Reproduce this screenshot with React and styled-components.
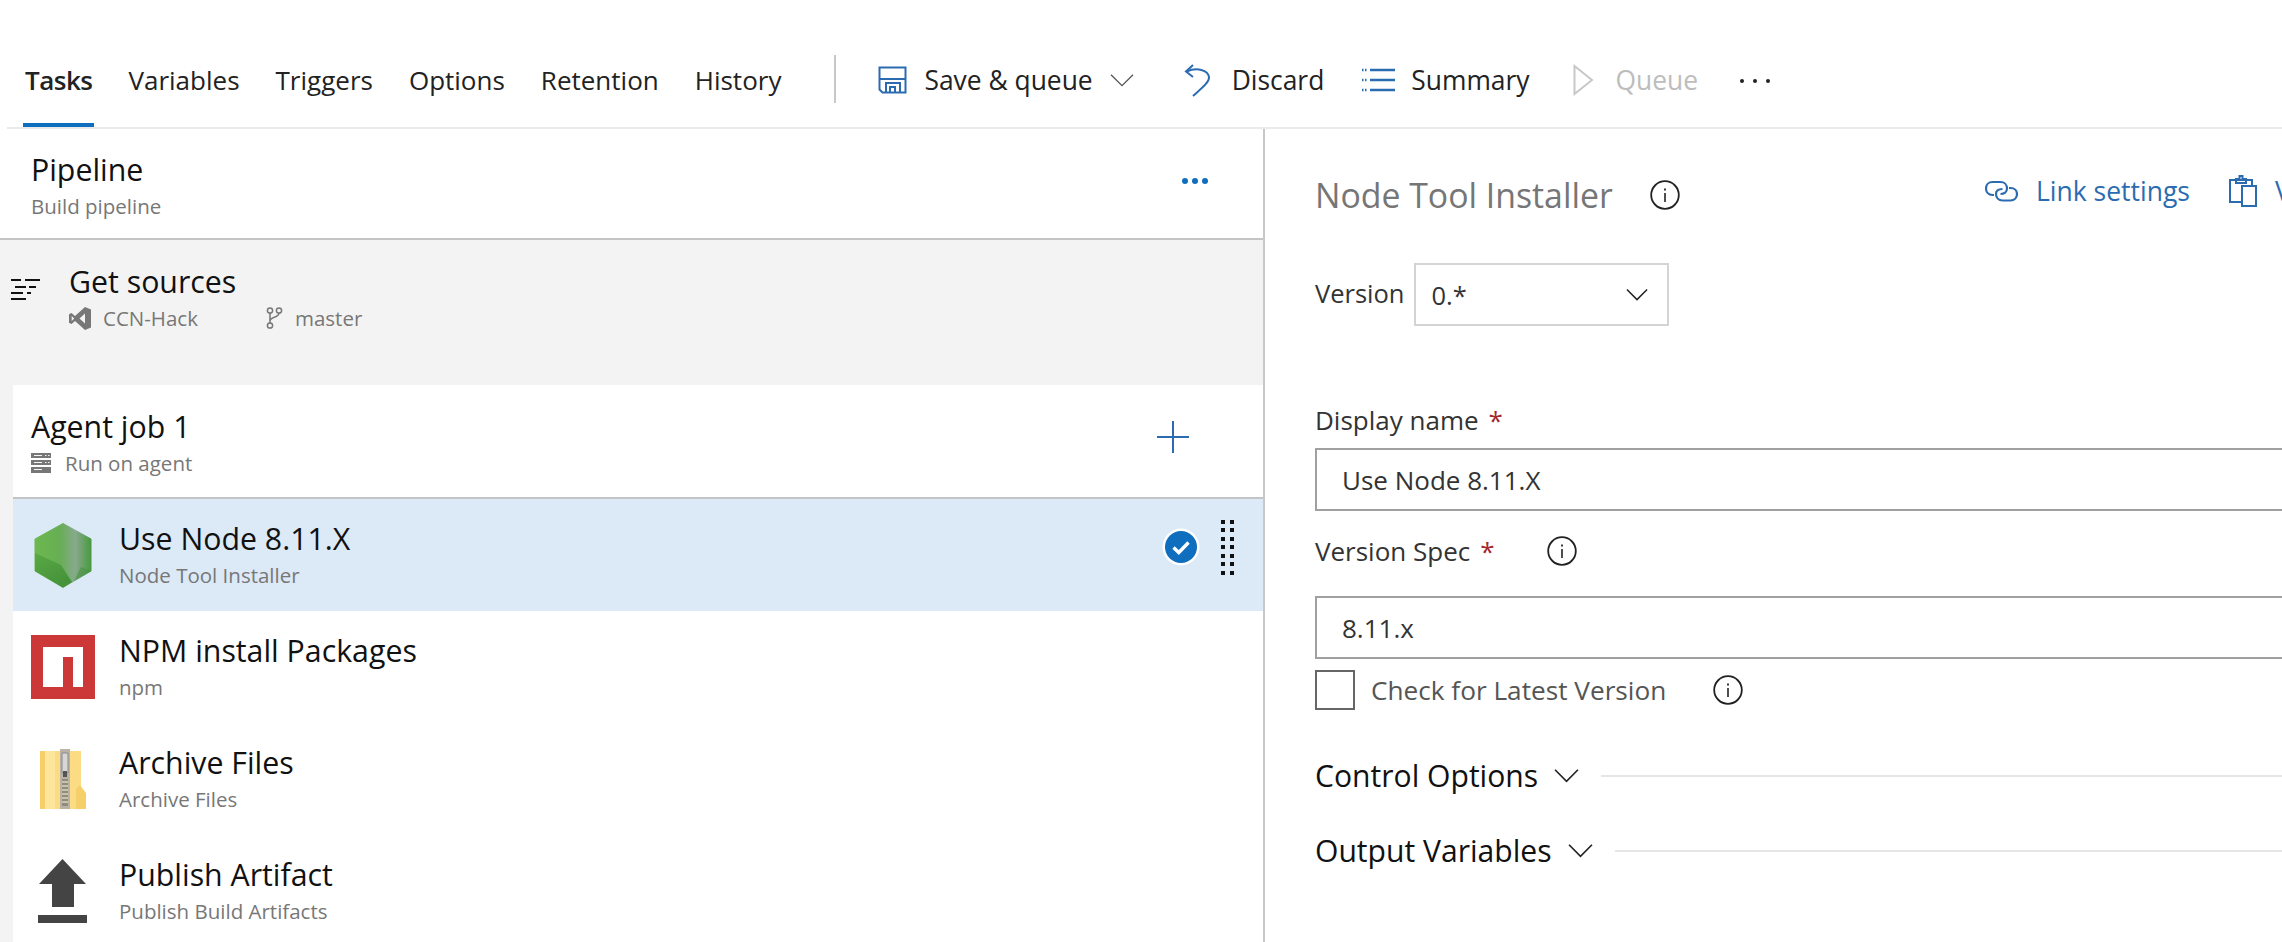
import React from "react";
import styled, { createGlobalStyle } from "styled-components";

const GlobalStyle = createGlobalStyle`
  html, body { margin: 0; padding: 0; background: #fff; }
  body { font-family: "Open Sans", "Noto Sans", sans-serif; color: #111; }
`;

const BLUE = "#2b6cb0";

const InfoIcon = ({ size = 30 }) => (
  <svg width={size} height={size} viewBox="0 0 30 30" fill="none" stroke="#222">
    <circle cx="15" cy="15" r="13.8" strokeWidth="1.8" />
    <path d="M15 13v9" strokeWidth="1.6" />
    <path d="M15 8.4v2" strokeWidth="1.8" />
  </svg>
);

const Chevron = ({ width = 24, color = "#222", weight = 1.6 }) => (
  <svg width={width} height={width * 0.6} viewBox="0 0 24 14" fill="none" stroke={color} strokeWidth={weight}>
    <path d="M1 1.5 L12 12.5 L23 1.5" />
  </svg>
);

const SaveIcon = () => (
  <svg width="29" height="28" viewBox="0 0 29 28" fill="none" stroke={BLUE} strokeWidth="2">
    <path d="M1.5 1.5h26v25H4.500l-3-3z" />
    <path d="M1.5 13h26" />
    <path d="M8 26.500V17h14v9.500" />
    <path d="M12 26v-5h5v5" />
  </svg>
);

const DiscardIcon = () => (
  <svg width="27" height="33" viewBox="0 0 27 33" fill="none" stroke={BLUE} strokeWidth="2">
    <path d="M9 1 L2 7.500 L9 13" />
    <path d="M2.500 7.500 C13 3 24 6 25 13 C25.500 18 18 24 9 32" />
  </svg>
);

const SummaryIcon = () => (
  <svg width="33" height="24" viewBox="0 0 33 24" fill="none" stroke={BLUE} strokeWidth="2.400">
    <path d="M8 2h25M8 12h25M8 22h25" />
    <path d="M0 2h5M0 12h5M0 22h5" strokeDasharray="1.5 1.5" />
  </svg>
);

const QueueIcon = () => (
  <svg width="21" height="32" viewBox="0 0 21 32" fill="none" stroke="#c8c8c8" strokeWidth="2">
    <path d="M1.500 2 L19 16 L1.500 30 Z" />
  </svg>
);

const SourcesIcon = () => (
  <svg width="29" height="23" viewBox="0 0 29 23" fill="none" stroke="#111" strokeWidth="2">
    <path d="M0 2h10M14 2h15M4 9h11M18 9h7M0 15h12M16 15h4M0 21h15" />
  </svg>
);

const VsIcon = () => (
  <svg width="22" height="23" viewBox="0 0 22 23" fill="#777">
    <path d="M16 0l6 2.500v18L16 23 6 14l-3.500 3L0 15.700V7.300L2.500 6 6 9zM16 6.500L10.500 11.500 16 16.500zM2.700 9v5l2.500-2.500z" fillRule="evenodd" />
  </svg>
);

const BranchIcon = () => (
  <svg width="17" height="22" viewBox="0 0 17 22" fill="none" stroke="#777" strokeWidth="1.500">
    <circle cx="4" cy="3.500" r="2.600" />
    <circle cx="4" cy="18.500" r="2.600" />
    <circle cx="13" cy="3.500" r="2.600" />
    <path d="M4 6v10M13 6c0 5-9 3.500-9 8" />
  </svg>
);

const ServerIcon = () => (
  <svg width="20" height="20" viewBox="0 0 20 20" fill="#777">
    <path d="M0 0h20v5H0zM0 7h20v5H0zM0 14h20v6H0z" />
    <path d="M3 2h8v1H3zM14 2h1.500v1H14zM17 2h1.500v1H17zM3 9h8v1H3zM14 9h1.500v1H14zM17 9h1.500v1H17zM3 16h8v1H3z" fill="#f4f4f4" />
  </svg>
);

const CheckBadge = () => (
  <svg width="38" height="38" viewBox="0 0 38 38">
    <circle cx="19" cy="19" r="18.500" fill="#fff" />
    <circle cx="19" cy="19" r="16" fill="#106ebe" />
    <path d="M11.500 19.500 L16.800 24.500 L26.500 14.500" fill="none" stroke="#fff" strokeWidth="3.400" />
  </svg>
);

const NodeIcon = () => (
  <svg width="58" height="65" viewBox="0 0 58 65">
    <defs>
      <linearGradient id="nodeBody" x1="0" y1="0" x2="1" y2="0">
        <stop offset="0" stopColor="#6db84f" />
        <stop offset="0.45" stopColor="#67ae55" />
        <stop offset="0.72" stopColor="#88a98d" />
        <stop offset="1" stopColor="#489a40" />
      </linearGradient>
      <linearGradient id="nodeLow" x1="0" y1="0" x2="0.6" y2="1">
        <stop offset="0" stopColor="#5aa845" />
        <stop offset="1" stopColor="#449339" />
      </linearGradient>
    </defs>
    <path d="M29 0.500 L57 16 L57 48 L29 64.500 L1 48 L1 16 Z" fill="url(#nodeBody)" stroke="url(#nodeBody)" strokeLinejoin="round" />
    <path d="M1 30 L1 48 L29 64.500 L38 59 L27 42 Z" fill="url(#nodeLow)" />
    <path d="M47 44 L57 48 L40 58 Z" fill="#46933f" opacity="0.6" />
  </svg>
);

const NpmIcon = () => (
  <svg width="64" height="64" viewBox="0 0 64 64">
    <path d="M0 0h64v64H0z" fill="#cb3837" />
    <path d="M12 12h40v40H42V22H32v30H12z" fill="#fff" />
  </svg>
);

const ZipIcon = () => (
  <svg width="48" height="60" viewBox="0 0 48 60">
    <path d="M1 2h41v58H1z" fill="#fbdc85" />
    <path d="M1 2h5v58H1z" fill="#f6cf68" />
    <path d="M6 2h10v58H6z" fill="#fee59c" />
    <path d="M37 60V40l4-4 6 8v16z" fill="#f5cf6a" />
    <path d="M21 0h10v60H21z" fill="#b8b3a6" />
    <path d="M23 4h6v20h-6z" fill="#d7d7d7" stroke="#8a8a8a" />
    <path d="M24 22h4v6h-4z" fill="#555" />
    <path d="M23 30h6v27h-6z" fill="#8f8b7d" />
    <path d="M23 33h6M23 37h6M23 41h6M23 45h6M23 49h6M23 53h6" stroke="#ddd6b8" strokeWidth="1.500" />
  </svg>
);

const PublishIcon = () => (
  <svg width="50" height="64" viewBox="0 0 50 64" fill="#444">
    <path d="M24.500 0 L48 25 L36 25 L36 48 L14 48 L14 25 L1 25 Z" />
    <path d="M0 56h49v8H0z" />
  </svg>
);

const LinkIcon = () => (
  <svg width="33" height="22" viewBox="0 0 33 22" fill="none" stroke={BLUE} strokeWidth="2.200">
    <path d="M9 15H7.500C3.500 15 1 12 1 8.500S3.500 2 7.500 2h8c4 0 6.500 3 6.500 6.500S19 14 15.500 14" />
    <path d="M24 8h1.500c4 0 6.500 2.500 6.500 6s-2.500 6.500-6.500 6.500h-8c-4 0-6.500-3-6.500-6.500S14 9 17.500 9" />
  </svg>
);

const ClipboardIcon = () => (
  <svg width="28" height="32" viewBox="0 0 28 32" fill="none" stroke={BLUE} strokeWidth="2">
    <path d="M13 27H1V5h22v6" />
    <path d="M7 8V4h3.500V1h3v3H17v4z" />
    <path d="M13 11h14v20H13z" />
  </svg>
);

const Page = styled.div`
  width: 2282px;
  height: 942px;
  overflow: hidden;
  display: flex;
  flex-direction: column;
  background: #fff;
`;

const Toolbar = styled.div`
  height: 129px;
  flex: none;
  box-sizing: border-box;
  margin-left: 7px;
  padding-left: 18px;
  border-bottom: 2px solid #eaeaea;
  display: flex;
  align-items: center;
  font-size: 26px;
`;

const Tabs = styled.div`
  display: flex;
  gap: 36px;
  align-self: stretch;
`;

const Tab = styled.div`
  padding-top: 61px;
  line-height: 38px;
  height: 127px;
  box-sizing: border-box;
  color: #222;
  position: relative;
  font-weight: ${(p) => (p.$active ? 600 : 400)};
  letter-spacing: ${(p) => (p.$active ? "-0.5px" : "0")};

  &::after {
    content: ${(p) => (p.$active ? '""' : "none")};
    position: absolute;
    left: -2px;
    right: -2px;
    bottom: 0;
    height: 4px;
    background: #106ebe;
  }
`;

const Divider = styled.div`
  width: 2px;
  height: 48px;
  background: #c8c8c8;
  margin: 30px 42px 0 53px;
`;

const Action = styled.div`
  display: flex;
  align-items: center;
  gap: ${(p) => p.$gap || 20}px;
  margin-right: ${(p) => p.$after || 0}px;
  margin-top: 33px;
  font-size: 26.400px;
  color: ${(p) => (p.$disabled ? "#bdbdbd" : "#222")};
`;

const Dots = styled.div`
  display: flex;
  gap: 9px;
  margin-top: 35px;

  & i {
    width: 4px;
    height: 4px;
    border-radius: 50%;
    background: #222;
  }
`;

const Body = styled.div`
  flex: 1;
  display: flex;
  min-height: 0;
`;

const LeftPanel = styled.div`
  width: 1265px;
  flex: none;
  box-sizing: border-box;
  border-right: 2px solid #c8c8c8;
  background: #f3f3f3;
`;

const PipelineHead = styled.div`
  height: 111px;
  box-sizing: border-box;
  background: #fff;
  border-bottom: 2px solid #c4c4c4;
  padding: 23px 0 0 31px;
  display: flex;
  justify-content: space-between;
`;

const Title = styled.div`
  font-size: 30.300px;
  line-height: 36px;
  color: #111;
`;

const Sub = styled.div`
  font-size: 20.500px;
  line-height: 36px;
  color: #777;
`;

const MoreDots = styled.div`
  display: flex;
  gap: 4px;
  margin: 26px 55px 0 0;

  & i {
    width: 6px;
    height: 6px;
    border-radius: 50%;
    background: #106ebe;
  }
`;

const Sources = styled.div`
  height: 145px;
  box-sizing: border-box;
  padding: 24px 0 0 11px;
  display: flex;
  gap: 29px;
`;

const SourcesGlyph = styled.div`
  padding-top: 14px;
`;

const MetaLine = styled.div`
  display: flex;
  align-items: center;
  gap: ${(p) => p.$gap || 12}px;
`;

const Spacer = styled.div`
  width: 44px;
`;

const Jobs = styled.div`
  margin-left: 13px;
  background: #fff;
  height: 560px;
`;

const JobHead = styled.div`
  height: 114px;
  box-sizing: border-box;
  border-bottom: 2px solid #c4c4c4;
  padding: 24px 74px 0 18px;
  display: flex;
  justify-content: space-between;
`;

const Plus = styled.div`
  width: 32px;
  height: 32px;
  margin-top: 12px;
  background:
    linear-gradient(${BLUE}, ${BLUE}) center / 100% 2px no-repeat,
    linear-gradient(${BLUE}, ${BLUE}) center / 2px 100% no-repeat;
`;

const Task = styled.div`
  height: 112px;
  display: flex;
  align-items: center;
  background: ${(p) => (p.$selected ? "#dce9f7" : "#fff")};
  position: relative;
`;

const TaskGlyph = styled.div`
  width: 106px;
  flex: none;
  display: flex;
  justify-content: center;
  padding-right: 7px;
  box-sizing: border-box;
`;

const TaskText = styled.div`
  flex: 1;
  padding-top: 4px;
`;

const TaskStatus = styled.div`
  display: flex;
  align-items: center;
  gap: 21px;
  margin-right: 29px;
  margin-top: -16px;
`;

const Gripper = styled.div`
  display: grid;
  grid-template-columns: 4px 4px;
  column-gap: 5px;
  row-gap: 4.500px;

  & i {
    height: 4px;
    background: #111;
  }
`;

const RightPanel = styled.div`
  flex: 1;
  min-width: 0;
  overflow: hidden;
  padding: 0 0 0 50px;
`;

const PanelHead = styled.div`
  height: 134px;
  box-sizing: border-box;
  display: flex;
  align-items: center;
  white-space: nowrap;
  padding-bottom: 2px;
`;

const PanelTitle = styled.div`
  font-size: 33.800px;
  line-height: 44px;
  color: #767676;
  margin-right: 37px;
`;

const HeadLinks = styled.div`
  margin-left: auto;
  display: flex;
  align-items: center;
  color: ${BLUE};
  font-size: 26.500px;
  margin-top: -8px;
  margin-right: -166px;
`;

const HeadLink = styled.div`
  display: flex;
  align-items: center;
  gap: 18px;
  margin-right: 39px;
`;

const VersionRow = styled.div`
  display: flex;
  align-items: center;
  gap: 9px;
  font-size: 25.500px;
  color: #333;
`;

const VersionLabel = styled.span`
  margin-top: -3px;
`;

const Select = styled.div`
  width: 255px;
  height: 63px;
  box-sizing: border-box;
  border: 2px solid #d4d4d4;
  padding: 0 19px 0 16px;
  display: flex;
  align-items: center;
  justify-content: space-between;
`;

const Field = styled.div`
  color: #333;
  font-size: 26px;
`;

const FieldLabel = styled.div`
  display: flex;
  align-items: center;
  box-sizing: border-box;
  line-height: 36px;
  height: ${(p) => p.$height}px;
  margin-top: ${(p) => p.$top || 0}px;
  padding-bottom: ${(p) => p.$lift || 0}px;
  gap: 10px;
`;

const Required = styled.span`
  color: #a4262c;
`;

const LabelInfo = styled.span`
  display: flex;
  margin-left: 42px;
`;

const Input = styled.div`
  width: 1100px;
  height: 63px;
  box-sizing: border-box;
  border: 2px solid #a0a0a0;
  padding: 0 25px;
  display: flex;
  align-items: center;
  font-size: 26px;
  color: #333;
`;

const CheckRow = styled.div`
  display: flex;
  align-items: center;
  margin-top: 11px;
  font-size: 26.200px;
  color: #555;
`;

const CheckBox = styled.div`
  width: 40px;
  height: 40px;
  box-sizing: border-box;
  border: 2px solid #666;
  margin-right: 16px;
`;

const CheckInfo = styled.span`
  display: flex;
  margin-left: 47px;
`;

const Section = styled.div`
  display: flex;
  align-items: center;
  height: 75px;
  font-size: 30.100px;
  color: #111;
  margin-top: ${(p) => p.$top || 0}px;

  & svg {
    margin: 0 22px 0 16px;
    flex: none;
  }

  &::after {
    content: "";
    flex: 1;
    height: 2px;
    background: #e6e6e6;
  }
`;

const tabs = ["Tasks", "Variables", "Triggers", "Options", "Retention", "History"];

const tasks = [
  { title: "Use Node 8.11.X", sub: "Node Tool Installer", icon: <NodeIcon />, selected: true },
  { title: "NPM install Packages", sub: "npm", icon: <NpmIcon /> },
  { title: "Archive Files", sub: "Archive Files", icon: <ZipIcon /> },
  { title: "Publish Artifact", sub: "Publish Build Artifacts", icon: <PublishIcon /> },
];

const App = () => (
  <Page>
    <GlobalStyle />
    <Toolbar>
      <Tabs>
        {tabs.map((t) => (
          <Tab key={t} $active={t === "Tasks"}>{t}</Tab>
        ))}
      </Tabs>
      <Divider />
      <Action $gap={17} $after={50}>
        <SaveIcon />
        <span>Save &amp; queue</span>
        <Chevron width={24} color="#555" weight={1.3} />
      </Action>
      <Action $gap={21} $after={38}>
        <DiscardIcon />
        <span>Discard</span>
      </Action>
      <Action $gap={16} $after={43}>
        <SummaryIcon />
        <span>Summary</span>
      </Action>
      <Action $gap={22} $after={42} $disabled>
        <QueueIcon />
        <span>Queue</span>
      </Action>
      <Dots><i /><i /><i /></Dots>
    </Toolbar>
    <Body>
      <LeftPanel>
        <PipelineHead>
          <div>
            <Title>Pipeline</Title>
            <Sub>Build pipeline</Sub>
          </div>
          <MoreDots><i /><i /><i /></MoreDots>
        </PipelineHead>
        <Sources>
          <SourcesGlyph><SourcesIcon /></SourcesGlyph>
          <div>
            <Title>Get sources</Title>
            <MetaLine>
              <VsIcon />
              <Sub>CCN-Hack</Sub>
              <Spacer />
              <BranchIcon />
              <Sub>master</Sub>
            </MetaLine>
          </div>
        </Sources>
        <Jobs>
          <JobHead>
            <div>
              <Title>Agent job 1</Title>
              <MetaLine $gap={14}>
                <ServerIcon />
                <Sub>Run on agent</Sub>
              </MetaLine>
            </div>
            <Plus />
          </JobHead>
          {tasks.map((t) => (
            <Task key={t.title} $selected={t.selected}>
              <TaskGlyph>{t.icon}</TaskGlyph>
              <TaskText>
                <Title>{t.title}</Title>
                <Sub>{t.sub}</Sub>
              </TaskText>
              {t.selected && (
                <TaskStatus>
                  <CheckBadge />
                  <Gripper>
                    {Array.from({ length: 14 }, (_, i) => <i key={i} />)}
                  </Gripper>
                </TaskStatus>
              )}
            </Task>
          ))}
        </Jobs>
      </LeftPanel>
      <RightPanel>
        <PanelHead>
          <PanelTitle>Node Tool Installer</PanelTitle>
          <InfoIcon />
          <HeadLinks>
            <HeadLink>
              <LinkIcon />
              <span>Link settings</span>
            </HeadLink>
            <HeadLink>
              <ClipboardIcon />
              <span>View YAML</span>
            </HeadLink>
          </HeadLinks>
        </PanelHead>
        <VersionRow>
          <VersionLabel>Version</VersionLabel>
          <Select>
            <span>0.*</span>
            <Chevron width={22} />
          </Select>
        </VersionRow>
        <Field>
          <FieldLabel $height={57} $top={65}>
            <span>Display name</span>
            <Required>*</Required>
          </FieldLabel>
          <Input>Use Node 8.11.X</Input>
          <FieldLabel $height={85} $lift={6}>
            <span>Version Spec</span>
            <Required>*</Required>
            <LabelInfo><InfoIcon /></LabelInfo>
          </FieldLabel>
          <Input>8.11.x</Input>
        </Field>
        <CheckRow>
          <CheckBox />
          <span>Check for Latest Version</span>
          <CheckInfo><InfoIcon /></CheckInfo>
        </CheckRow>
        <Section $top={28}>
          Control Options
          <Chevron width={25} />
        </Section>
        <Section>
          Output Variables
          <Chevron width={25} />
        </Section>
      </RightPanel>
    </Body>
  </Page>
);

export default App;
